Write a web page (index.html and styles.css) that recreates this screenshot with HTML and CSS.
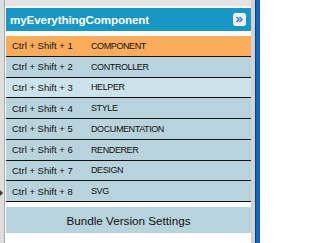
FILE: index.html
```html
<!DOCTYPE html>
<html>
<head>
<meta charset="utf-8">
<link rel="stylesheet" href="styles.css">
</head>
<body>
<div class="window">
  <div class="gutter"><span class="pointer"></span></div>
  <div class="content">
    <div class="topbar"></div>
    <div class="panel">
      <div class="header">
        <span class="title">myEverythingComponent</span>
        <span class="collapse">
          <svg width="13" height="13" viewBox="0 0 13 13">
            <rect x="0.5" y="0.5" width="12" height="12" rx="2" fill="#e9f1fa" stroke="#ffffff"/>
            <path d="M3.5 4 L6 6.5 L3.5 9 M6.5 4 L9 6.5 L6.5 9" fill="none" stroke="#3b73b5" stroke-width="1.4"/>
          </svg>
        </span>
      </div>
      <div class="rows">
        <div class="row active"><span class="key">Ctrl + Shift + 1</span><span class="name">COMPONENT</span></div>
        <div class="row"><span class="key">Ctrl + Shift + 2</span><span class="name">CONTROLLER</span></div>
        <div class="row light"><span class="key">Ctrl + Shift + 3</span><span class="name">HELPER</span></div>
        <div class="row"><span class="key">Ctrl + Shift + 4</span><span class="name">STYLE</span></div>
        <div class="row"><span class="key">Ctrl + Shift + 5</span><span class="name">DOCUMENTATION</span></div>
        <div class="row"><span class="key">Ctrl + Shift + 6</span><span class="name">RENDERER</span></div>
        <div class="row"><span class="key">Ctrl + Shift + 7</span><span class="name">DESIGN</span></div>
        <div class="row"><span class="key">Ctrl + Shift + 8</span><span class="name">SVG</span></div>
      </div>
      <div class="bundle">Bundle Version Settings</div>
    </div>
  </div>
  <div class="scroll"></div>
  <div class="edge"></div>
</div>
</body>
</html>
```

FILE: styles.css
```css
html, body {
  margin: 0;
  padding: 0;
  background: #ffffff;
}

.window {
  display: flex;
  width: 260px;
  height: 243px;
  overflow: hidden;
  font-family: "Liberation Sans", Arial, sans-serif;
}

.gutter {
  position: relative;
  width: 4px;
  background: #dedede;
  border-right: 1px solid #a9a9a9;
}

.pointer {
  position: absolute;
  left: 0;
  top: 190px;
  width: 0;
  height: 0;
  border-top: 3px solid transparent;
  border-bottom: 3px solid transparent;
  border-left: 3px solid #3a3a3a;
}

.content {
  flex: 1;
  display: flex;
  flex-direction: column;
}

.topbar {
  height: 6px;
  background: #e3e3e3;
  border-bottom: 1px solid #f2f2f2;
}

.panel {
  flex: 1;
  display: flex;
  flex-direction: column;
  padding-left: 1px;
  background: #ffffff;
}

.header {
  margin-top: 1px;
  height: 23px;
  background: #1a96c4;
  display: flex;
  align-items: center;
  justify-content: space-between;
  padding: 0 5px 0 4px;
}

.title {
  color: #ffffff;
  font-weight: bold;
  font-size: 11.6px;
  letter-spacing: -0.1px;
}

.collapse {
  display: flex;
  width: 13px;
  height: 13px;
}

.rows {
  margin-top: 5px;
  display: flex;
  flex-direction: column;
}

.row {
  height: 19.75px;
  border-bottom: 1px solid #111111;
  background: #b8d3dc;
  display: flex;
  align-items: center;
  padding-left: 6px;
  color: #111111;
  font-size: 9.5px;
}

.row.active {
  background: #fbab5c;
}

.row.light {
  background: #cde3eb;
}

.key {
  width: 79px;
}

.name {
  font-size: 9px;
  letter-spacing: -0.4px;
}

.bundle {
  margin-top: 5px;
  height: 26px;
  background: #b8d3dc;
  display: flex;
  align-items: center;
  justify-content: center;
  font-size: 11.7px;
  color: #111111;
}

.scroll {
  width: 4px;
  background: #d2d2d2;
}

.edge {
  width: 4px;
  background: #1562b3;
  border-left: 1px solid #0d3f7a;
}
```
